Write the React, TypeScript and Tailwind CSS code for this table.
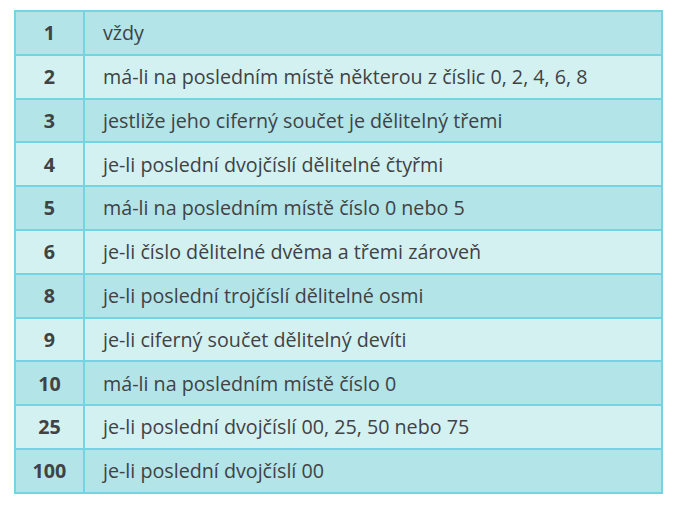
import React from "react";

const rows = [
  ["1", "vždy"],
  ["2", "má-li na posledním místě některou z číslic 0, 2, 4, 6, 8"],
  ["3", "jestliže jeho ciferný součet je dělitelný třemi"],
  ["4", "je-li poslední dvojčíslí dělitelné čtyřmi"],
  ["5", "má-li na posledním místě číslo 0 nebo 5"],
  ["6", "je-li číslo dělitelné dvěma a třemi zároveň"],
  ["8", "je-li poslední trojčíslí dělitelné osmi"],
  ["9", "je-li ciferný součet dělitelný devíti"],
  ["10", "má-li na posledním místě číslo 0"],
  ["25", "je-li poslední dvojčíslí 00, 25, 50 nebo 75"],
  ["100", "je-li poslední dvojčíslí 00"],
];

const App = () => {
  return (
    <div className="w-[676px] h-[507px] bg-white pt-[10px] pl-[14px]" style={{ fontFamily: '"Open Sans", sans-serif' }}>
      <table className="w-[649px] border-collapse border-2 border-[#74d4e1] text-[#404244] text-[19.7px]">
        <tbody>
          {rows.map(([n, t], i) => (
            <tr key={n} className={i % 2 === 0 ? "bg-[#b3e4e8] h-[43.8px]" : "bg-[#d4f1f2] h-[43.8px]"}>
              <td className="w-[69px] border-2 border-[#74d4e1] text-center font-bold p-0">{n}</td>
              <td className="border-2 border-[#74d4e1] pl-[18px] p-0">{t}</td>
            </tr>
          ))}
        </tbody>
      </table>
    </div>
  );
};

export default App;
